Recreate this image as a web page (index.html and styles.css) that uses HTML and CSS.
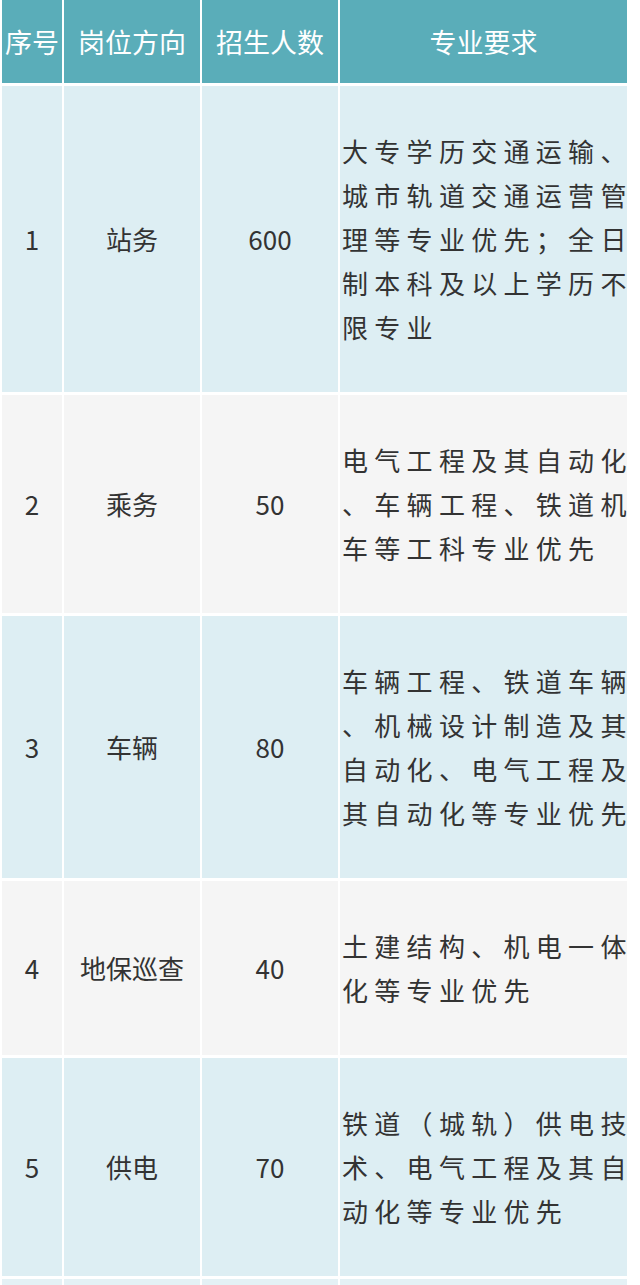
FILE: index.html
```html
<!DOCTYPE html>
<html lang="zh-CN">
<head>
<meta charset="utf-8">
<title>招生岗位</title>
<link rel="stylesheet" href="styles.css">
</head>
<body>
<div class="table">
  <div class="row head">
    <div class="cell c1">序号</div>
    <div class="cell c2">岗位方向</div>
    <div class="cell c3">招生人数</div>
    <div class="cell c4">专业要求</div>
  </div>
  <div class="row blue">
    <div class="cell c1">1</div>
    <div class="cell c2">站务</div>
    <div class="cell c3">600</div>
    <div class="cell c4 desc"><span class="ln">大专学历交通运输、</span><span class="ln">城市轨道交通运营管</span><span class="ln">理等专业优先；全日</span><span class="ln">制本科及以上学历不</span><span class="ln">限专业</span></div>
  </div>
  <div class="row gray">
    <div class="cell c1">2</div>
    <div class="cell c2">乘务</div>
    <div class="cell c3">50</div>
    <div class="cell c4 desc"><span class="ln">电气工程及其自动化</span><span class="ln">、车辆工程、铁道机</span><span class="ln">车等工科专业优先</span></div>
  </div>
  <div class="row blue">
    <div class="cell c1">3</div>
    <div class="cell c2">车辆</div>
    <div class="cell c3">80</div>
    <div class="cell c4 desc"><span class="ln">车辆工程、铁道车辆</span><span class="ln">、机械设计制造及其</span><span class="ln">自动化、电气工程及</span><span class="ln">其自动化等专业优先</span></div>
  </div>
  <div class="row gray">
    <div class="cell c1">4</div>
    <div class="cell c2">地保巡查</div>
    <div class="cell c3">40</div>
    <div class="cell c4 desc"><span class="ln">土建结构、机电一体</span><span class="ln">化等专业优先</span></div>
  </div>
  <div class="row blue">
    <div class="cell c1">5</div>
    <div class="cell c2">供电</div>
    <div class="cell c3">70</div>
    <div class="cell c4 desc"><span class="ln">铁道（城轨）供电技</span><span class="ln">术、电气工程及其自</span><span class="ln">动化等专业优先</span></div>
  </div>
  <div class="row light">
    <div class="cell"></div>
    <div class="cell"></div>
    <div class="cell"></div>
    <div class="cell"></div>
  </div>
</div>
</body>
</html>
```

FILE: styles.css
```css
html, body {
  margin: 0;
  padding: 0;
  background: #ffffff;
}

body {
  font-family: "PingFang SC", "Noto Sans CJK SC", "Noto Sans", sans-serif;
  color: #333333;
  width: 640px;
  height: 1285px;
  overflow: hidden;
}

.table {
  display: flex;
  flex-direction: column;
  gap: 3px;
  padding-left: 2px;
}

.row {
  display: grid;
  grid-template-columns: 60px 136px 136px 287px;
  column-gap: 2px;
}

.cell {
  display: flex;
  align-items: center;
  justify-content: center;
  font-size: 26px;
  line-height: 44px;
}

.head .cell {
  height: 83px;
  background: #5aadb9;
  color: #ffffff;
  font-size: 27px;
}

.blue .cell {
  background: #ddeef3;
}

.gray .cell {
  background: #f5f5f5;
}

.light .cell {
  height: 6px;
  background: #e4f1f5;
}

.desc {
  flex-direction: column;
  align-items: flex-start;
  justify-content: center;
  padding: 43px 0 43px 2px;
}

.ln {
  display: block;
  letter-spacing: 6.3px;
  margin-right: -6.3px;
  white-space: nowrap;
}
```
